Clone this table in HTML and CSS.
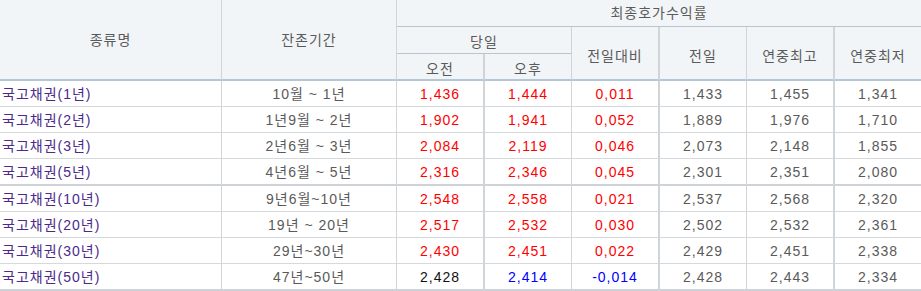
FILE: index.html
```html
<!DOCTYPE html>
<html lang="ko">
<head>
<meta charset="utf-8">
<title>최종호가수익률</title>
<link rel="stylesheet" href="styles.css">
</head>
<body>
<div class="grid">
  <div class="hd h-name">종류명</div>
  <div class="hd h-term">잔존기간</div>
  <div class="hd h-yield">최종호가수익률</div>
  <div class="hd h-today">당일</div>
  <div class="hd h-diff b2 hb">전일대비</div>
  <div class="hd h-prev hb">전일</div>
  <div class="hd h-high b2 hb">연중최고</div>
  <div class="hd h-low hb nr">연중최저</div>
  <div class="hd h-am b2g hb">오전</div>
  <div class="hd h-pm hb">오후</div>

  <div class="c nm">국고채권(1년)</div><div class="c">10월 ~ 1년</div><div class="c up b2">1,436</div><div class="c up">1,444</div><div class="c up b2">0,011</div><div class="c">1,433</div><div class="c b2">1,455</div><div class="c nr">1,341</div>
  <div class="c nm">국고채권(2년)</div><div class="c">1년9월 ~ 2년</div><div class="c up b2">1,902</div><div class="c up">1,941</div><div class="c up b2">0,052</div><div class="c">1,889</div><div class="c b2">1,976</div><div class="c nr">1,710</div>
  <div class="c nm">국고채권(3년)</div><div class="c">2년6월 ~ 3년</div><div class="c up b2">2,084</div><div class="c up">2,119</div><div class="c up b2">0,046</div><div class="c">2,073</div><div class="c b2">2,148</div><div class="c nr">1,855</div>
  <div class="c nm sep">국고채권(5년)</div><div class="c sep">4년6월 ~ 5년</div><div class="c up b2 sep">2,316</div><div class="c up sep">2,346</div><div class="c up b2 sep">0,045</div><div class="c sep">2,301</div><div class="c b2 sep">2,351</div><div class="c nr sep">2,080</div>
  <div class="c nm">국고채권(10년)</div><div class="c">9년6월~10년</div><div class="c up b2">2,548</div><div class="c up">2,558</div><div class="c up b2">0,021</div><div class="c">2,537</div><div class="c b2">2,568</div><div class="c nr">2,320</div>
  <div class="c nm">국고채권(20년)</div><div class="c">19년 ~ 20년</div><div class="c up b2">2,517</div><div class="c up">2,532</div><div class="c up b2">0,030</div><div class="c">2,502</div><div class="c b2">2,532</div><div class="c nr">2,361</div>
  <div class="c nm">국고채권(30년)</div><div class="c">29년~30년</div><div class="c up b2">2,430</div><div class="c up">2,451</div><div class="c up b2">0,022</div><div class="c">2,429</div><div class="c b2">2,451</div><div class="c nr">2,338</div>
  <div class="c nm sep">국고채권(50년)</div><div class="c sep">47년~50년</div><div class="c blk b2 sep">2,428</div><div class="c dn sep">2,414</div><div class="c dn b2 sep">-0,014</div><div class="c sep">2,428</div><div class="c b2 sep">2,443</div><div class="c nr sep">2,334</div>
</div>
</body>
</html>
```
FILE: styles.css
```css
* { box-sizing: border-box; }
body {
  margin: 0;
  background: #fff;
  font-family: "Liberation Sans", "Noto Sans CJK KR", sans-serif;
  font-size: 14px;
  letter-spacing: 1px;
  color: #5a5a5a;
}
.grid {
  display: grid;
  width: 921px;
  grid-template-columns: 222px 175px 88px 87px 88px 87px 88px 86px;
  grid-template-rows: 27px 27px 27px 26px 26px 26px 27px 26px 26px 26px 27px;
}
.hd, .c {
  display: flex;
  align-items: center;
  justify-content: center;
  border-right: 1px solid #d0d5da;
  border-bottom: 1px solid #d6d9dc;
  white-space: nowrap;
  line-height: 1;
}
.hd {
  background: #f2f5f7;
  color: #5a5a5a;
  border-bottom-color: #b8c5d0;
}
.hb { border-bottom: 2px solid #b5c7d6; padding-top: 5px; }
.h-name { grid-column: 1; grid-row: 1 / 4; border-bottom: 2px solid #b5c7d6; }
.h-term { grid-column: 2; grid-row: 1 / 4; border-bottom: 2px solid #b5c7d6; }
.h-yield { grid-column: 3 / 9; grid-row: 1; border-right: 0; }
.h-today { grid-column: 3 / 5; grid-row: 2; padding-top: 4px; border-right-color: #c8d3dc; }
.h-diff { grid-column: 5; grid-row: 2 / 4; padding-top: 6px; }
.h-prev { grid-column: 6; grid-row: 2 / 4; padding-top: 6px; }
.h-high { grid-column: 7; grid-row: 2 / 4; padding-top: 6px; }
.h-low { grid-column: 8; grid-row: 2 / 4; padding-top: 6px; }
.h-am { grid-column: 3; grid-row: 3; }
.h-pm { grid-column: 4; grid-row: 3; }
.b2 { border-right-width: 2px; }
.b2g { border-right: 2px solid #d0d4d8; }
.nr { border-right: 0; }
.sep { border-bottom: 2px solid #cfd3d7; }
.nm { justify-content: flex-start; padding-left: 2px; color: #4b2a8c; }
.up { color: #ff0000; }
.dn { color: #0000ff; }
.blk { color: #111; }
```
